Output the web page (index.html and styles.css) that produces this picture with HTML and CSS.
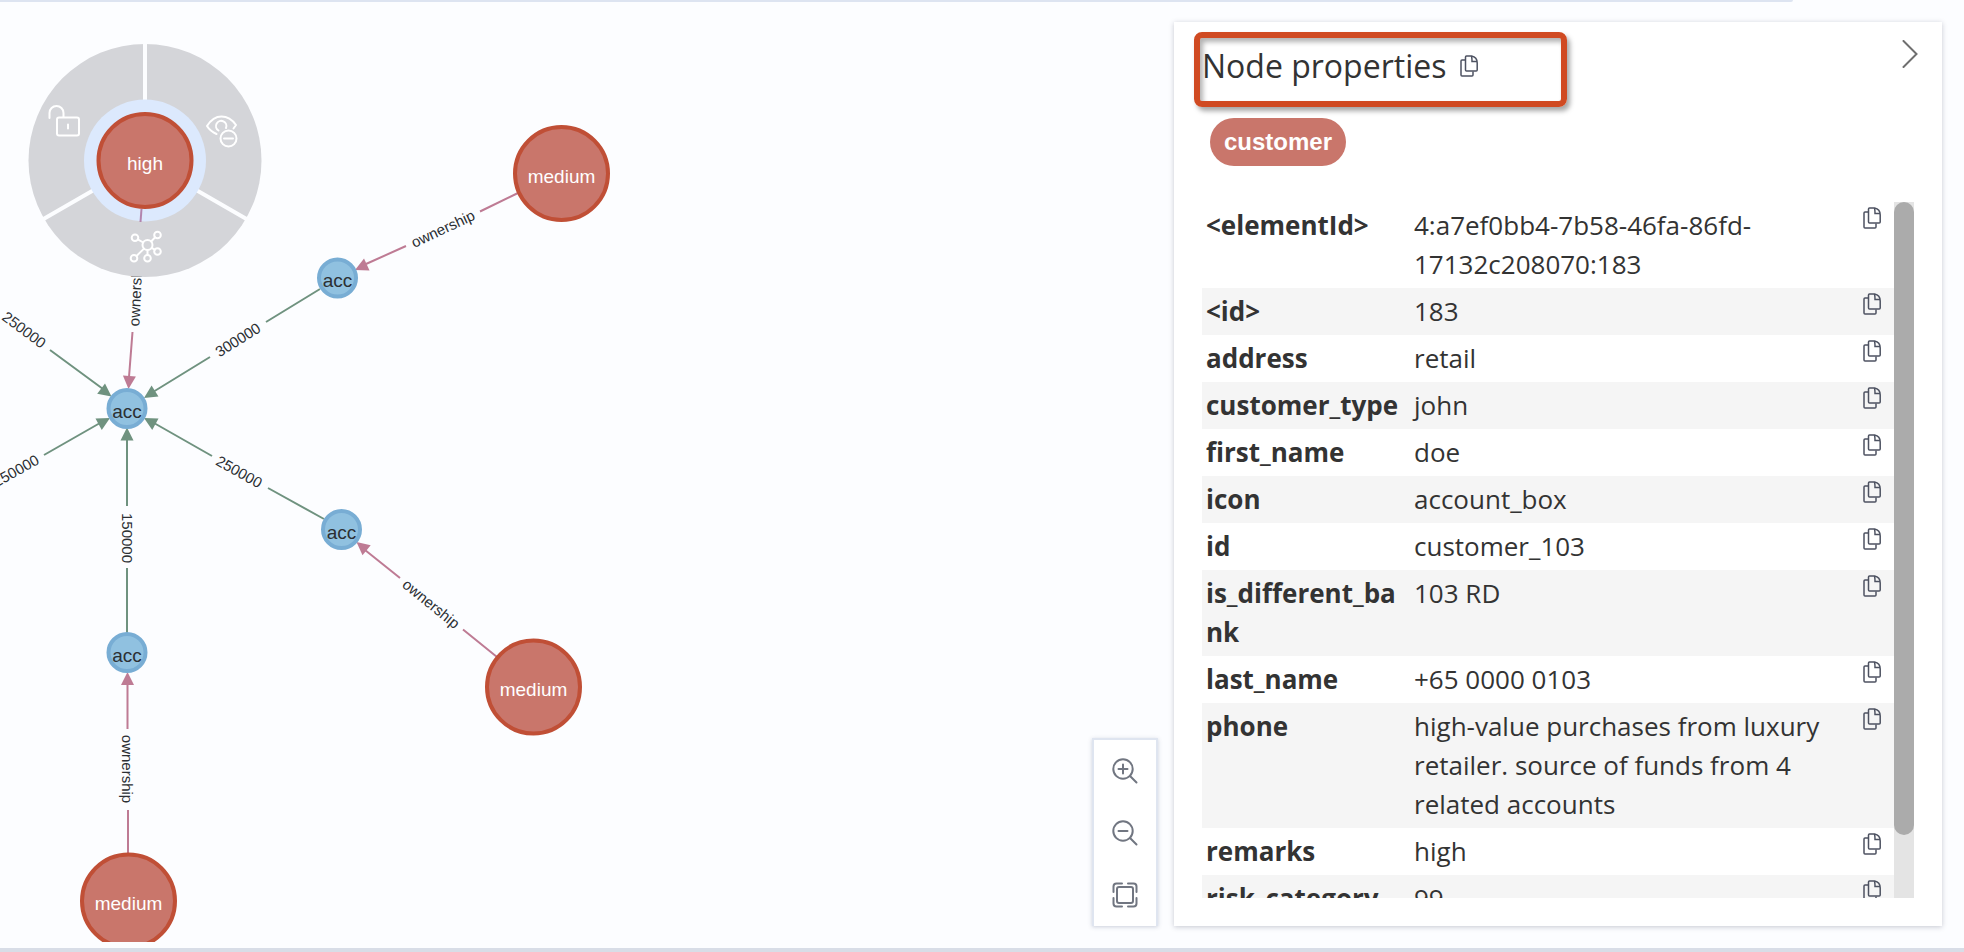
FILE: index.html
```html
<!DOCTYPE html>
<html lang="en">
<head>
<meta charset="utf-8">
<title>Node properties</title>
<link rel="stylesheet" href="styles.css">
</head>
<body>
<svg class="defs" width="0" height="0" aria-hidden="true">
  <symbol id="copy" viewBox="0 0 18 22">
    <path d="M5 5H2Q1 5 1 6V20Q1 21 2 21H12Q13 21 13 20V16.500"/>
    <path d="M6.500 1H11.500Q17.200 2 17.200 8V15Q17.200 16 16.200 16H6.500Q5.500 16 5.500 15V2Q5.500 1 6.500 1Z"/>
    <path d="M11.500 1Q12 3 12 6.500H17"/>
  </symbol>
</svg>
<div class="app">
  <svg class="graph" role="img" aria-label="Account graph">
    <g class="edge transfer">
      <path d="M50 350L103 389M44 455L100 423M127 440V506M127 568V633M320 289L266 322M210 357L153 392M154 423L212 456M268 488L324 519"/>
      <g class="tips">
        <path transform="translate(111.500 396.500) rotate(37)" d="M0 0L-13 -6.500V6.500Z"/>
        <path transform="translate(110 418) rotate(-29)" d="M0 0L-13 -6.500V6.500Z"/>
        <path transform="translate(127 427.500) rotate(-90)" d="M0 0L-13 -6.500V6.500Z"/>
        <path transform="translate(144 398) rotate(148)" d="M0 0L-13 -6.500V6.500Z"/>
        <path transform="translate(144 418) rotate(209)" d="M0 0L-13 -6.500V6.500Z"/>
      </g>
    </g>
    <g class="edge owner">
      <path d="M132.500 332L129 377M127.500 684V729M128 810V853M518 193L480 211.500M406 246L366 264M497 657L463 629.500M400 578L365 550"/>
      <g class="tips">
        <path transform="translate(128.500 389) rotate(94)" d="M0 0L-13 -6.500V6.500Z"/>
        <path transform="translate(127.500 672) rotate(-90)" d="M0 0L-13 -6.500V6.500Z"/>
        <path transform="translate(355 270) rotate(155)" d="M0 0L-13 -6.500V6.500Z"/>
        <path transform="translate(356.500 542) rotate(219)" d="M0 0L-13 -6.500V6.500Z"/>
      </g>
    </g>
    <g class="edge-label">
      <text transform="translate(24 330) rotate(37)" dy="5">250000</text>
      <text transform="translate(16 471) rotate(-29)" dy="5">250000</text>
      <text transform="translate(127 538) rotate(90)" dy="5">150000</text>
      <text transform="translate(238 340) rotate(-32)" dy="5">300000</text>
      <text transform="translate(239 472) rotate(29)" dy="5">250000</text>
      <text transform="translate(136 292) rotate(-87)" dy="5">ownership</text>
      <text transform="translate(127 769) rotate(90)" dy="5">ownership</text>
      <text transform="translate(443 229) rotate(-25)" dy="5">ownership</text>
      <text transform="translate(431 604) rotate(39)" dy="5">ownership</text>
    </g>

    <g class="wheel">
      <circle class="wheel-disc" cx="145" cy="160.500" r="116.500"/>
      <path class="wheel-gap" d="M145 160V43M145 160.500L43.500 219M145 160.500L246.500 219"/>
      <circle class="wheel-halo" cx="145" cy="160.500" r="61"/>
      <path class="wheel-link" d="M141.500 209L140.500 222"/>
      <g class="wheel-icon">
        <path d="M49.500 118V113A7 7 0 0 1 63.500 113V117M68 124.500V128.500"/>
        <rect x="57" y="117.500" width="22" height="18" rx="2"/>
        <path d="M216.500 134Q210 131 207 126Q213 116.500 221.500 116.500Q230 116.500 236 125L233.500 128.500M218.500 130.500A5.200 5.200 0 1 1 226 128"/>
        <circle cx="228.500" cy="138.500" r="8"/>
        <path d="M224 138.500H233"/>
        <circle cx="147.500" cy="245" r="5"/>
        <circle cx="135" cy="237.700" r="3.300"/>
        <circle cx="157.500" cy="235" r="3.300"/>
        <circle cx="157.500" cy="251.500" r="3.300"/>
        <circle cx="147.500" cy="258.300" r="3.300"/>
        <circle cx="134" cy="258.300" r="3.300"/>
        <path d="M137.800 239.400L143.200 242.500M155 237.300L151.200 241.500M151.700 247.800L154.700 249.700M147.500 250V255M136.500 256L144 248.600"/>
      </g>
    </g>

    <g class="node customer">
      <circle cx="145" cy="160.500" r="46.500"/><text x="145" y="170">high</text>
      <circle cx="561.500" cy="173.500" r="46.500"/><text x="561.500" y="183">medium</text>
      <circle cx="533.500" cy="687" r="46.500"/><text x="533.500" y="696">medium</text>
      <circle cx="128.500" cy="901" r="46.500"/><text x="128.500" y="910">medium</text>
    </g>
    <g class="node account">
      <circle cx="127" cy="408.500" r="18.500"/><text x="127" y="418">acc</text>
      <circle cx="337.500" cy="278" r="18.500"/><text x="337.500" y="287">acc</text>
      <circle cx="341.500" cy="529.500" r="18.500"/><text x="341.500" y="539">acc</text>
      <circle cx="127" cy="652.500" r="18.500"/><text x="127" y="662">acc</text>
    </g>
  </svg>

  <div class="top-rule"></div>
  <main class="stage">
    <div class="zoom" role="toolbar" aria-label="Zoom">
      <button type="button" aria-label="Zoom in"><svg viewBox="0 0 26 26"><circle cx="11" cy="11" r="9.700"/><path d="M18 18L24.500 24.500M11 6.500V15.500M6.500 11H15.500"/></svg></button>
      <button type="button" aria-label="Zoom out"><svg viewBox="0 0 26 26"><circle cx="11" cy="11" r="9.700"/><path d="M18 18L24.500 24.500M6.500 11H15.500"/></svg></button>
      <button type="button" aria-label="Zoom to fit"><svg viewBox="0 0 26 26"><rect x="5" y="5" width="16" height="16" rx="2"/><path d="M1.500 10V4.500Q1.500 1.500 4.500 1.500H10M16 1.500H21.500Q24.500 1.500 24.500 4.500V10M24.500 16V21.500Q24.500 24.500 21.500 24.500H16M10 24.500H4.500Q1.500 24.500 1.500 21.500V16"/></svg></button>
    </div>

    <aside class="panel">
      <header class="panel-head">
        <h1>Node properties</h1>
        <button class="copy" type="button" aria-label="Copy all properties"><svg><use href="#copy"/></svg></button>
        <button class="collapse" type="button" aria-label="Collapse panel"><svg viewBox="0 0 16 28"><path d="M1.500 1L14.500 14L1.500 27"/></svg></button>
        <span class="highlight"></span>
      </header>
      <span class="tag">customer</span>
      <div class="props-area">
        <div class="props">
          <table>
            <colgroup><col class="c-key"><col><col class="c-copy"></colgroup>
            <tbody>
              <tr><th scope="row">&lt;elementId&gt;</th><td>4:a7ef0bb4-7b58-46fa-86fd-17132c208070:183</td><td class="act"><button class="copy" type="button" aria-label="Copy"><svg><use href="#copy"/></svg></button></td></tr>
              <tr><th scope="row">&lt;id&gt;</th><td>183</td><td class="act"><button class="copy" type="button" aria-label="Copy"><svg><use href="#copy"/></svg></button></td></tr>
              <tr><th scope="row">address</th><td>retail</td><td class="act"><button class="copy" type="button" aria-label="Copy"><svg><use href="#copy"/></svg></button></td></tr>
              <tr><th scope="row">customer_type</th><td>john</td><td class="act"><button class="copy" type="button" aria-label="Copy"><svg><use href="#copy"/></svg></button></td></tr>
              <tr><th scope="row">first_name</th><td>doe</td><td class="act"><button class="copy" type="button" aria-label="Copy"><svg><use href="#copy"/></svg></button></td></tr>
              <tr><th scope="row">icon</th><td>account_box</td><td class="act"><button class="copy" type="button" aria-label="Copy"><svg><use href="#copy"/></svg></button></td></tr>
              <tr><th scope="row">id</th><td>customer_103</td><td class="act"><button class="copy" type="button" aria-label="Copy"><svg><use href="#copy"/></svg></button></td></tr>
              <tr><th scope="row">is_different_bank</th><td>103 RD</td><td class="act"><button class="copy" type="button" aria-label="Copy"><svg><use href="#copy"/></svg></button></td></tr>
              <tr><th scope="row">last_name</th><td>+65 0000 0103</td><td class="act"><button class="copy" type="button" aria-label="Copy"><svg><use href="#copy"/></svg></button></td></tr>
              <tr><th scope="row">phone</th><td>high-value purchases from luxury retailer. source of funds from 4 related accounts</td><td class="act"><button class="copy" type="button" aria-label="Copy"><svg><use href="#copy"/></svg></button></td></tr>
              <tr><th scope="row">remarks</th><td>high</td><td class="act"><button class="copy" type="button" aria-label="Copy"><svg><use href="#copy"/></svg></button></td></tr>
              <tr><th scope="row">risk_category</th><td>99</td><td class="act"><button class="copy" type="button" aria-label="Copy"><svg><use href="#copy"/></svg></button></td></tr>
            </tbody>
          </table>
        </div>
        <div class="track"><div class="thumb"></div></div>
      </div>
    </aside>
  </main>
</div>
</body>
</html>
```
FILE: styles.css
```css
* { box-sizing: border-box; }

body {
  margin: 0;
  color: #333;
  font: 26px/39px "Open Sans", "Noto Sans", sans-serif;
}

button {
  display: block;
  margin: 0;
  padding: 0;
  border: 0;
  background: none;
  cursor: pointer;
}

svg { display: block; }
.defs { position: absolute; }

.app {
  position: relative;
  display: flex;
  flex-direction: column;
  height: 100vh;
  overflow: hidden;
  background: #fcfdff;
  border-bottom: 4px solid #d8dde7;
}

/* graph canvas */
.graph {
  position: absolute;
  top: 0;
  left: 0;
  width: 100%;
  height: calc(100% - 6px);
  font-family: "Liberation Sans", Arial, sans-serif;
  text-anchor: middle;
}
.edge { fill: none; stroke-width: 2; }
.tips { stroke: none; }
.transfer { stroke: #6f927f; }
.transfer .tips { fill: #6f927f; }
.owner { stroke: #be7b94; }
.owner .tips { fill: #be7b94; }
.edge-label { font-size: 15px; fill: #2b2f33; }
.node { font-size: 19px; }
.node circle { stroke-width: 4; }
.customer circle { fill: #c9766b; stroke: #c04f36; }
.customer text { fill: #fff; }
.account circle { fill: #90c1e0; stroke: #78add4; }
.account text { fill: #2b2f33; }
.wheel-disc { fill: #d4d5d9; }
.wheel-gap { fill: none; stroke: #fcfdff; stroke-width: 4; }
.wheel-halo { fill: #dce9fd; }
.wheel-link { stroke: #b284ad; stroke-width: 2; }
.wheel-icon { fill: none; stroke: #fff; stroke-width: 2; stroke-linecap: round; stroke-linejoin: round; }

.top-rule {
  height: 2px;
  margin-right: 171px;
  border-radius: 0 0 2px 0;
  background: #dde4f1;
}

.stage {
  position: relative;
  display: flex;
  flex: 1;
  justify-content: flex-end;
  align-items: flex-end;
  gap: 16px;
  min-height: 0;
  padding: 20px 22px 22px;
}

.zoom {
  width: 66px;
  border: 2px solid #dfe5f0;
  border-bottom: 0;
  background: #fff;
  box-shadow: 0 1px 4px rgba(60, 70, 110, 0.25);
}
.zoom button {
  display: grid;
  place-items: center;
  width: 100%;
  height: 62px;
}
.zoom svg {
  width: 26px;
  height: 26px;
  fill: none;
  stroke: #717681;
  stroke-width: 2;
  stroke-linecap: round;
}

/* properties panel */
.panel {
  display: flex;
  flex-direction: column;
  width: min(768px, 60vw);
  height: 100%;
  padding: 20px 0 28px;
  background: #fff;
  box-shadow: 0 1px 5px rgba(40, 45, 70, 0.25);
}
.panel-head {
  position: relative;
  display: flex;
  align-items: center;
  gap: 14px;
  padding: 0 24px 0 28px;
}
h1 {
  margin: 0;
  font-size: 32px;
  line-height: 48px;
  font-weight: 400;
}
.copy svg {
  width: 18px;
  height: 22px;
  fill: none;
  stroke: #4d5261;
  stroke-width: 1.5;
}
.collapse {
  align-self: flex-start;
  margin: -2px 0 0 auto;
}
.collapse svg {
  width: 16px;
  height: 28px;
  fill: none;
  stroke: #6f6f6f;
  stroke-width: 2;
  stroke-linecap: round;
}
.highlight {
  position: absolute;
  top: -10px;
  left: 20px;
  width: 373px;
  height: 75px;
  border: 6px solid #d04a22;
  border-radius: 8px;
  box-shadow: 3px 4px 5px rgba(0, 0, 0, 0.35), inset 3px 4px 5px rgba(0, 0, 0, 0.3);
  pointer-events: none;
}
.tag {
  align-self: flex-start;
  margin: 28px 0 36px 36px;
  padding: 0 14px;
  border-radius: 24px;
  background: #c9766b;
  color: #fff;
  font: bold 24px/48px "Liberation Sans", Arial, sans-serif;
}
.props-area {
  display: flex;
  flex: 1;
  min-height: 0;
  margin: 0 28px;
}
.props {
  flex: 1;
  overflow-y: auto;
  scrollbar-width: none;
}
table {
  width: 100%;
  table-layout: fixed;
  border-collapse: collapse;
}
.c-key { width: 208px; }
.c-copy { width: 43px; }
tr:nth-child(even) { background: #f5f5f5; }
th, td {
  padding: 4px;
  text-align: left;
  vertical-align: top;
  overflow-wrap: anywhere;
}
th { font-weight: 700; }
.act { padding: 5px 12px 0; }
.track {
  width: 20px;
  background: #e4e4e4;
}
.thumb {
  height: 91%;
  border-radius: 10px;
  background: #ababab;
}
```
